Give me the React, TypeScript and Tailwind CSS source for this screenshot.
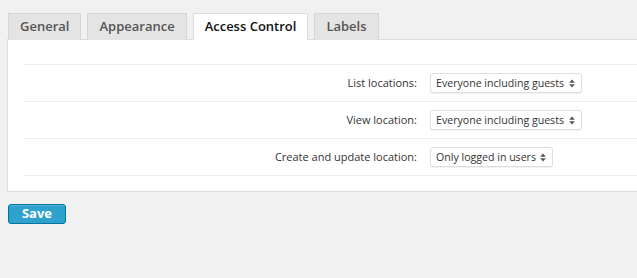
import React from 'react';

const tabs = ['General', 'Appearance', 'Access Control', 'Labels'];

const rows = [
  { label: 'List locations:', value: 'Everyone including guests', width: 'w-[152px]' },
  { label: 'View location:', value: 'Everyone including guests', width: 'w-[152px]' },
  { label: 'Create and update location:', value: 'Only logged in users', width: 'w-[123px]' },
];

const Arrows = () => (
  <svg width="6" height="9" viewBox="0 0 6 9" className="shrink-0">
    <path d="M3 0.5 L5.8 3.8 L0.2 3.8 Z" fill="#555" />
    <path d="M3 8.5 L5.8 5.2 L0.2 5.2 Z" fill="#555" />
  </svg>
);

const App: React.FC = () => {
  const active = 'Access Control';

  return (
    <div className="min-h-screen bg-[#f1f1f1] pt-[13px] overflow-hidden font-['Open_Sans',sans-serif]">
      <div className="flex items-end gap-[6px] pl-[8px]">
        {tabs.map(t => (
          <div
            key={t}
            className={`h-[27px] px-[11px] flex items-center border border-b-0 text-[13px] font-semibold -mb-px relative z-10 ${
              t === active
                ? 'bg-white border-[#dcdcdc] text-[#111]'
                : 'bg-[#e4e4e4] border-[#d6d6d6] text-[#555]'
            }`}
          >
            {t}
          </div>
        ))}
      </div>

      <div className="ml-[7px] mr-[-10px] bg-white border border-[#dcdcdc] pt-[24px] pb-[15px] pl-[16px]">
        <div className="border-t border-[#ececec]">
          {rows.map(r => (
            <div key={r.label} className="flex items-center h-[37px] border-b border-[#ececec]">
              <div className="w-[393px] text-right text-[11px] text-[#333] whitespace-nowrap">{r.label}</div>
              <div className="pl-[13px]">
                <div
                  className={`${r.width} h-[20px] flex items-center justify-between pl-[5px] pr-[6px] bg-white border border-[#dedede] rounded-[3px] shadow-[0_1px_1px_rgba(0,0,0,0.06)] text-[10.6px] text-[#333] whitespace-nowrap`}
                >
                  <span className="leading-none">{r.value}</span>
                  <Arrows />
                </div>
              </div>
            </div>
          ))}
        </div>
      </div>

      <div className="pl-[8px] pt-[12px]">
        <button className="w-[58px] h-[20px] flex items-center justify-center bg-[#2ea2cc] border border-[#0074a2] rounded-[3px] text-white text-[13px] font-bold shadow-[inset_0_1px_0_rgba(120,200,230,0.5)]">
          Save
        </button>
      </div>
    </div>
  );
};

export default App;
